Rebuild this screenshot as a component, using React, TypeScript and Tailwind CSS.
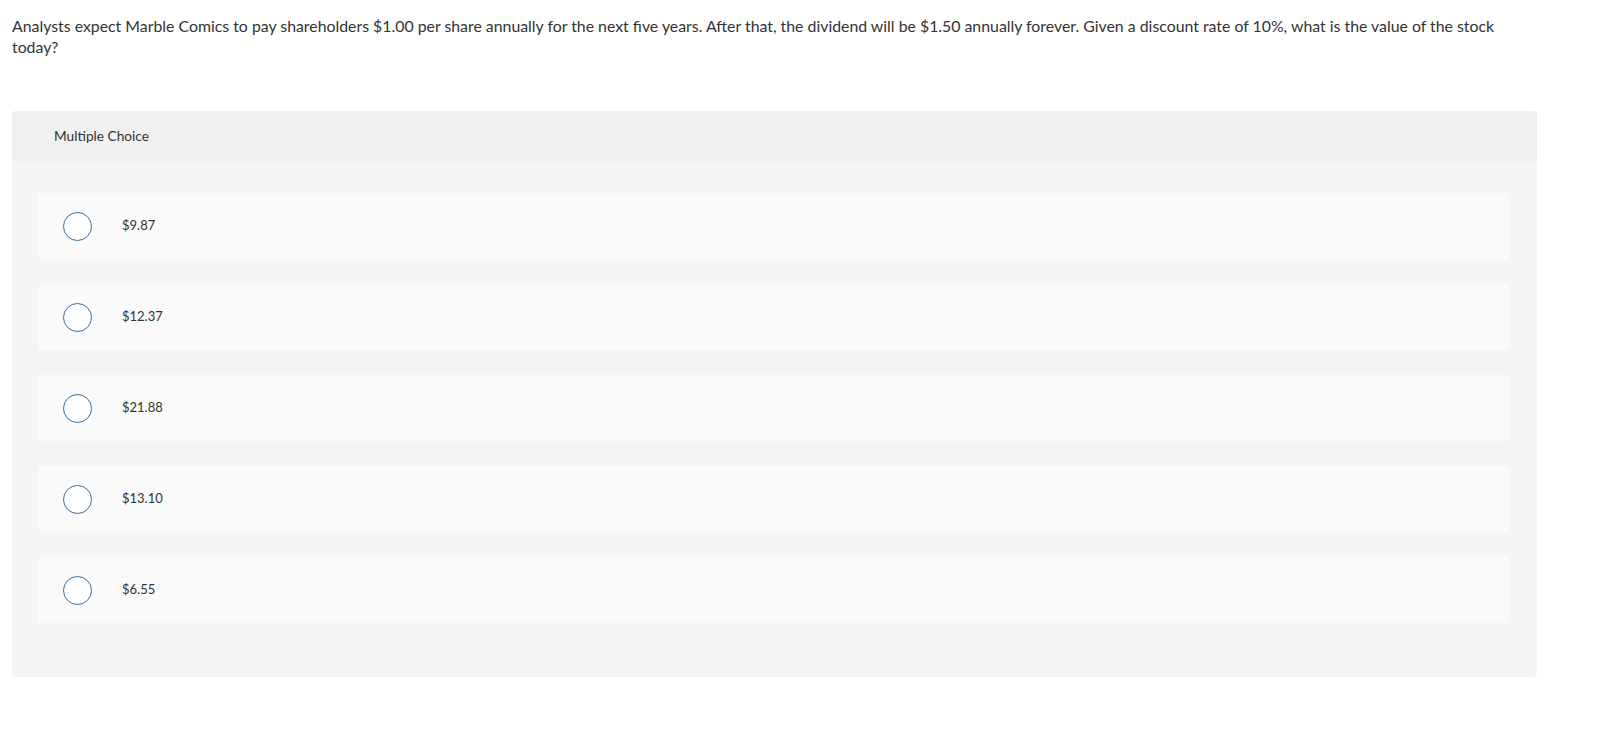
import React from 'react';

const choices = ['$9.87', '$12.37', '$21.88', '$13.10', '$6.55'];

function Radio() {
    return (
        <span className="block w-[29px] h-[29px] rounded-full border-[1.5px] border-[#3b6b9c] bg-white shrink-0" />
    );
}

export default function App() {
    return (
        <div className="min-h-screen bg-white text-[#333] font-['Lato','Liberation_Sans',sans-serif]">
            <div className="px-3 pt-[15px]">
                {/* Question */}
                <p className="text-[15.85px] leading-[21px] w-[1525px]">
                    Analysts expect Marble Comics to pay shareholders $1.00 per share annually for the next five years. After that, the dividend will be $1.50 annually forever. Given a discount rate of 10%, what is the value of the stock today?
                </p>

                {/* Answer panel */}
                <div className="mt-[54px] w-[1525px] rounded bg-[#f5f5f5]">
                    <div className="h-[50px] flex items-center pl-[42px] bg-[#f0f0f0] rounded-t text-[13.7px]">
                        Multiple Choice
                    </div>
                    <div className="pt-[32px] pb-[54px] pl-[26px] pr-[28px] flex flex-col gap-[25px]">
                        {choices.map(choice => (
                            <div key={choice} className="h-[66px] flex items-center pl-[25px] rounded bg-[#fafafa]">
                                <Radio />
                                <span className="ml-[30px] text-[13px]">{choice}</span>
                            </div>
                        ))}
                    </div>
                </div>
            </div>
        </div>
    );
}
